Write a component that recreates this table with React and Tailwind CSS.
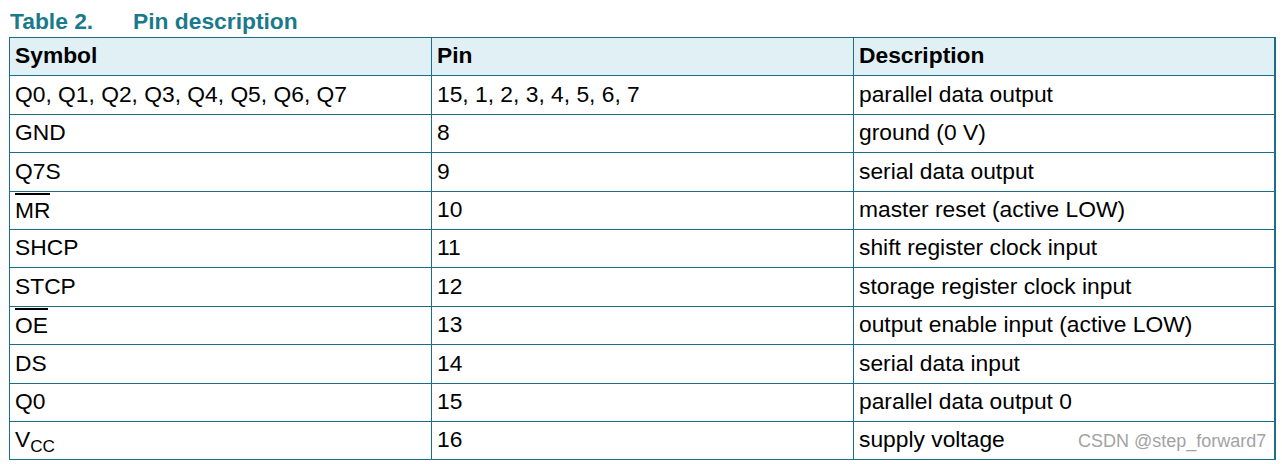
import React from 'react';

const rows = [
  { sym: 'Q0, Q1, Q2, Q3, Q4, Q5, Q6, Q7', pin: '15, 1, 2, 3, 4, 5, 6, 7', desc: 'parallel data output', h: 'h-[39px]' },
  { sym: 'GND', pin: '8', desc: 'ground (0 V)', h: 'h-[38px]' },
  { sym: 'Q7S', pin: '9', desc: 'serial data output', h: 'h-[39px]' },
  { sym: 'MR', bar: true, pin: '10', desc: 'master reset (active LOW)', h: 'h-[38px]' },
  { sym: 'SHCP', pin: '11', desc: 'shift register clock input', h: 'h-[38px]' },
  { sym: 'STCP', pin: '12', desc: 'storage register clock input', h: 'h-[39px]' },
  { sym: 'OE', bar: true, pin: '13', desc: 'output enable input (active LOW)', h: 'h-[38px]' },
  { sym: 'DS', pin: '14', desc: 'serial data input', h: 'h-[39px]' },
  { sym: 'Q0', pin: '15', desc: 'parallel data output 0', h: 'h-[38px]' },
  { sym: 'VCC', vcc: true, pin: '16', desc: 'supply voltage', h: 'h-[37px]', last: true },
];

const Cell = ({ children, bold, last }) => (
  <div className={`flex items-center pl-[5px] pb-[2px] ${last ? '' : 'border-r border-[#1a6e86]'} ${bold ? 'font-bold' : ''}`}>
    {children}
  </div>
);

const Symbol = ({ row }) => {
  if (row.bar) {
    return (
      <span className="inline-block border-t-2 border-black leading-none pt-[4px] mt-[-4px]">{row.sym}</span>
    );
  }
  if (row.vcc) {
    return (
      <span>V<sub>CC</sub></span>
    );
  }
  return row.sym;
};

export default function App() {
  return (
    <div className="relative w-[1282px] h-[464px] bg-white text-black font-['Liberation_Sans',Arial,sans-serif] text-[22.8px] overflow-hidden">
      {/* TITLE */}
      <div className="h-[37px] flex pl-[10px] pt-[4px] font-bold text-[#1a7a8c]">
        <span className="w-[123px]">Table 2.</span>
        <span>Pin description</span>
      </div>

      {/* TABLE */}
      <div className="ml-[9px] w-[1267px] border-l border-t border-b border-r-2 border-[#1a6e86]">
        <div className="grid grid-cols-[422px_422px_1fr] h-[38px] bg-[#e1f0f5] border-b border-[#1a6e86]">
          <Cell bold>Symbol</Cell>
          <Cell bold>Pin</Cell>
          <Cell bold last>Description</Cell>
        </div>
        {rows.map((r) => (
          <div key={r.sym + r.pin} className={`grid grid-cols-[422px_422px_1fr] ${r.h} ${r.last ? '' : 'border-b border-[#1a6e86]'}`}>
            <Cell><Symbol row={r} /></Cell>
            <Cell>{r.pin}</Cell>
            <Cell last>{r.desc}</Cell>
          </div>
        ))}
      </div>

      {/* WATERMARK */}
      <div className="absolute left-[1078px] top-[432px] text-[18px] text-[#a3a3a3] leading-none">
        CSDN @step_forward7
      </div>
    </div>
  );
}
